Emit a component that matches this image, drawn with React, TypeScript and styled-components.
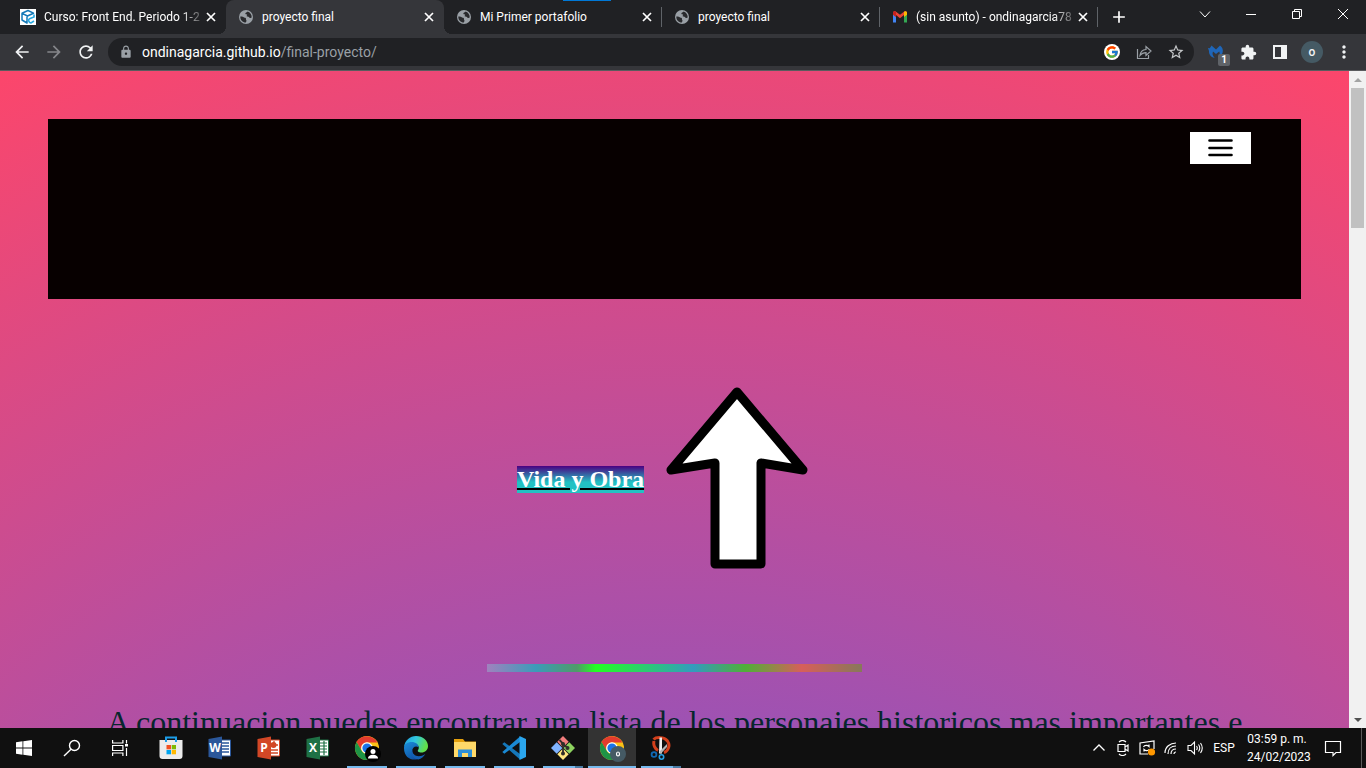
import React from "react";
import styled, { createGlobalStyle, css } from "styled-components";
import {
  MdArrowBack,
  MdArrowForward,
  MdRefresh,
  MdLock,
  MdStarBorder,
  MdExtension,
  MdMoreVert,
  MdClose,
  MdAdd,
} from "react-icons/md";
import { FcGoogle } from "react-icons/fc";

const ui = `Roboto, "Open Sans", sans-serif`;
const serif = `"Liberation Serif", "Times New Roman", serif`;

const GlobalStyle = createGlobalStyle`
  *, *::before, *::after { box-sizing: border-box; }
  body { margin: 0; background: #111; font-family: ${ui}; }
  button { font: inherit; color: inherit; background: none; border: 0; padding: 0; }
  svg { display: block; flex: none; }
`;

const Desktop = styled.div`
  display: flex;
  flex-direction: column;
  height: 100vh;
  overflow: hidden;
`;

/* ---------- tab strip ---------- */

const TabStrip = styled.header`
  position: relative;
  display: flex;
  flex: none;
  height: 34px;
  padding-left: 8px;
  background: #202124;
  color: #fff;
`;

const DragHandle = styled.span`
  position: absolute;
  top: 0;
  left: 563px;
  width: 48px;
  height: 1px;
  background: #0078d7;
`;

const Tab = styled.div<{ $active?: boolean; $divider?: boolean }>`
  position: relative;
  display: flex;
  align-items: center;
  flex: 0 1 218px;
  min-width: 0;
  padding: 0 7px 0 12px;
  background: ${(p) => (p.$active ? "#35363a" : "transparent")};
  border-radius: 8px 8px 0 0;

  ${(p) =>
    p.$active &&
    css`
      &::before,
      &::after {
        content: "";
        position: absolute;
        bottom: 0;
        width: 8px;
        height: 8px;
      }
      &::before {
        left: -8px;
        background: radial-gradient(circle at 0 0, #202124 8px, #35363a 8px);
      }
      &::after {
        right: -8px;
        background: radial-gradient(circle at 100% 0, #202124 8px, #35363a 8px);
      }
    `}

  ${(p) =>
    p.$divider &&
    css`
      &::after {
        content: "";
        position: absolute;
        right: 0;
        top: 7px;
        width: 1px;
        height: 20px;
        background: #5f6368;
      }
    `}
`;

const TabTitle = styled.span<{ $fade?: boolean }>`
  flex: 1;
  min-width: 0;
  margin: 0 -4px 0 8px;
  overflow: hidden;
  white-space: nowrap;
  font-size: 12px;
  line-height: 16px;
  ${(p) =>
    p.$fade &&
    css`
      mask-image: linear-gradient(to right, #000 84%, transparent);
    `}
`;

const TabClose = styled.button`
  display: grid;
  place-items: center;
  width: 16px;
  height: 16px;
`;

const NewTab = styled.button`
  display: grid;
  place-items: center;
  width: 28px;
  margin-left: 7px;
`;

const WindowControls = styled.div`
  display: flex;
  height: 28px;
  margin-left: auto;
`;

const WindowButton = styled.button`
  display: grid;
  place-items: center;
  width: 46px;
`;

/* ---------- toolbar ---------- */

const Toolbar = styled.nav`
  display: flex;
  align-items: center;
  flex: none;
  height: 37px;
  gap: 4px;
  padding: 0 8px;
  background: #35363a;
  border-bottom: 1px solid #5a5b5e;
`;

const IconButton = styled.button<{ $dim?: boolean }>`
  position: relative;
  display: grid;
  place-items: center;
  flex: none;
  width: 28px;
  height: 28px;
  color: ${(p) => (p.$dim ? "#85868a" : "#f1f3f4")};
`;

const Omnibox = styled.div`
  position: relative;
  display: flex;
  align-items: center;
  flex: 1;
  min-width: 0;
  height: 28px;
  gap: 4px;
  margin: 0 4px;
  padding: 0 4px 0 11px;
  border-radius: 14px;
  background: #202124;
  color: #9aa0a6;
`;

const Address = styled.div`
  flex: 1;
  min-width: 0;
  margin-left: 5px;
  overflow: hidden;
  white-space: nowrap;
  font-size: 14px;
  line-height: 20px;
  strong {
    font-weight: 400;
    color: #fff;
  }
`;

const ExtensionBadge = styled.span`
  position: absolute;
  right: 0;
  bottom: 0;
  width: 12px;
  height: 12px;
  border-radius: 2px;
  background: #5f6368;
  color: #fff;
  font-size: 10px;
  font-weight: 700;
  line-height: 12px;
  text-align: center;
`;

const Avatar = styled.span`
  display: grid;
  place-items: center;
  width: 22px;
  height: 22px;
  border-radius: 50%;
  background: #455a64;
  font-size: 12px;
  font-weight: 500;
  line-height: 16px;
`;

/* ---------- page ---------- */

const Viewport = styled.div`
  display: flex;
  flex: 1;
  min-height: 0;
`;

const Page = styled.main`
  flex: 1;
  min-width: 0;
  overflow: hidden;
  padding: 48px;
  background: radial-gradient(circle, #3f5efb 0%, #fc466b 100%) top / 100% 2924px no-repeat;
  font-family: ${serif};
`;

const Banner = styled.section`
  display: flex;
  align-items: flex-start;
  justify-content: flex-end;
  height: 180px;
  padding: 13px 50px;
  background: #070000;
`;

const MenuButton = styled.button`
  display: grid;
  place-items: center;
  width: 61px;
  height: 32px;
  background: #fff;
`;

const Hero = styled.section`
  display: flex;
  align-items: center;
  justify-content: center;
  height: 361px;
`;

const HeroLink = styled.a`
  background: linear-gradient(#4b0082 0%, #22c1c3 60%);
  color: #fff;
  font-size: 24px;
  font-weight: 700;
  line-height: 27px;
  text-decoration: underline 2px #000;
`;

const Rule = styled.hr`
  width: 30%;
  height: 8px;
  margin: 4px auto 0;
  border: 0;
  background: linear-gradient(
    to right,
    #a082be 0%,
    #3c9bb9 13%,
    #509b69 24%,
    #22ff22 29%,
    #349bbe 55%,
    #50af37 69%,
    #d75f5a 84%,
    #87785a 100%
  );
`;

const Intro = styled.p`
  margin: 32px 0 0;
  padding: 0 48px;
  color: #07262d;
  font-size: 32px;
  line-height: 37px;
  text-align: center;
  white-space: nowrap;
`;

const Scrollbar = styled.div`
  display: flex;
  flex-direction: column;
  align-items: center;
  flex: none;
  width: 17px;
  background: #f1f1f1;
`;

const ScrollTrack = styled.div`
  flex: 1;
  width: 13px;
`;

const ScrollThumb = styled.div`
  height: 140px;
  background: #c1c1c1;
`;

const ScrollArrow = styled.button`
  display: grid;
  place-items: center;
  width: 17px;
  height: 17px;
`;

/* ---------- taskbar ---------- */

const Taskbar = styled.footer`
  display: flex;
  flex: none;
  height: 40px;
  background: #101010;
  color: #fff;
`;

const Apps = styled.div`
  display: flex;
  gap: 1px;
  margin-left: 3px;
`;

const TaskButton = styled.button<{ $state?: "open" | "stacked" | "active" }>`
  position: relative;
  display: grid;
  place-items: center;
  width: 48px;
  height: 40px;
  background: ${(p) => (p.$state === "active" ? "#333" : "transparent")};

  ${(p) =>
    p.$state &&
    css`
      &::after {
        content: "";
        position: absolute;
        bottom: 0;
        left: ${p.$state === "active" ? "0" : "4px"};
        right: ${p.$state === "active" ? "0" : "4px"};
        height: 2px;
        background: ${p.$state === "stacked"
          ? "linear-gradient(to right, #76b9ed 32px, #4a7ba3 32px)"
          : "#76b9ed"};
      }
    `}
`;

const Tray = styled.div`
  display: flex;
  align-items: center;
  margin-left: auto;
`;

const TrayButton = styled.button<{ $wide?: boolean }>`
  display: grid;
  place-items: center;
  width: ${(p) => (p.$wide ? "56px" : "24px")};
  height: 40px;
`;

const Language = styled.span`
  width: 34px;
  margin-right: 6px;
  font-size: 12px;
  line-height: 16px;
  text-align: center;
`;

const Clock = styled.time`
  width: 60px;
  margin-right: -2px;
  font-size: 12px;
  line-height: 18px;
  text-align: center;
  white-space: nowrap;
`;

const ShowDesktop = styled.button`
  width: 5px;
  height: 40px;
  border-left: 1px solid #5a5a5a;
`;

/* ---------- drawings ---------- */

const Globe = () => (
  <svg width="16" height="16" viewBox="0 0 16 16" aria-hidden>
    <circle cx="8" cy="8" r="7" fill="#9aa0a6" />
    <path
      d="M2.300 7.500C4 7.200 5 7.500 5.700 8.300c.5.6 1.400.3 2 .8.600.6 0 1.500.5 1.900.6.4.2 1.600-.4 2.500C4.500 13.500 2.200 11 2.300 7.500zM9.500 2.600c-.2.9-1.200.9-1.900 1.400-.6.5-.2 1.300.6 1.300 1.200 0 1.200.8.6 1.300-.5.4 0 1 .8 1 1.200 0 1.500.9 2.200 1.300.6.300 1.400.1 1.900-.3.200-3-1.600-5.200-4.200-6z"
      fill="#292a2d"
    />
  </svg>
);

const CourseIcon = () => (
  <svg width="16" height="16" viewBox="0 0 16 16" aria-hidden>
    <rect width="16" height="16" fill="#fff" />
    <path d="M8 1.500L13.500 4.200L7.500 7L2 4.300ZM2 4.300V11L7 14V7" fill="none" stroke="#1479b8" strokeWidth="1.500" strokeLinejoin="round" />
    <path d="M14 5.500V8L9.500 9.700C8 10.500 8.500 13.500 11 14L14 12" fill="none" stroke="#27a9e1" strokeWidth="1.600" />
  </svg>
);

const GmailIcon = () => (
  <svg width="16" height="16" viewBox="0 0 16 16" aria-hidden>
    <path d="M1 4v9.500h3V7z" fill="#4285f4" />
    <path d="M15 4v9.500h-3V7z" fill="#34a853" />
    <path d="M1 5V3.800c0-1.500 1.600-2 2.700-1.200L8 5.800l4.300-3.200c1.100-.8 2.700-.3 2.700 1.200L12 8V6L8 9.200 4 6v2z" fill="#ea4335" />
    <path d="M1 3.800C1 2.500 2.500 2 3.500 2.500L4 3v5L1 5.700z" fill="#c5221f" />
    <path d="M12 3l.5-.5C13.500 2 15 2.500 15 3.800v1.900L12 8z" fill="#fbbc04" />
  </svg>
);

const ShareIcon = () => (
  <svg width="16" height="16" viewBox="0 0 16 16" fill="none" stroke="#9aa0a6" strokeWidth="1.200" aria-hidden>
    <path d="M1.500 5v9.500h11V11" />
    <path d="M4 11.500C4.500 7.500 7 5.700 10 5.500V2.500L15 7l-5 4.500V8.700C7.500 8.700 5.600 9.500 4 11.500z" />
  </svg>
);

const MalwareIcon = () => (
  <svg width="16" height="16" viewBox="0 0 16 16" aria-hidden>
    <path
      d="M3.500 1.500L8 5.500l4-4c2.500 1.500 3.500 4.500 2.500 7.500-.5 1.500-1.700 2.700-3.200 3.500.6-2 .6-3.700-.1-5L8 10 5 7.500c-1 2.500-.3 4 1.700 6.500C2.500 13 .8 10 1 7L0 4l1.800.2z"
      fill="#1f66b8"
    />
  </svg>
);

const SidePanelIcon = () => (
  <svg width="16" height="16" viewBox="0 0 16 16" aria-hidden>
    <path d="M1 1h14v14H1z M3 3v10h6V3z" fill="#f1f3f4" fillRule="evenodd" />
  </svg>
);

const UpArrow = () => (
  <svg width="188" height="188" viewBox="0 0 188 188" role="img" aria-label="Flecha hacia arriba">
    <path
      d="M93 6L159 84L117 77V178H71V77L27 84Z"
      fill="#fff"
      stroke="#000"
      strokeWidth="9"
      strokeLinejoin="round"
    />
  </svg>
);

const WindowsIcon = () => (
  <svg width="16" height="16" viewBox="0 0 16 16" fill="#fff" aria-hidden>
    <path d="M0 2.300L6.500 1.300v6.200H0zM7.300 1.200L16 0v7.500H7.300zM0 8.500h6.500v6.200L0 13.700zM7.300 8.500H16V16l-8.700-1.200z" />
  </svg>
);

const SearchIcon = () => (
  <svg width="18" height="18" viewBox="0 0 18 18" fill="none" stroke="#fff" strokeWidth="1.400" aria-hidden>
    <circle cx="11.500" cy="6.500" r="5" />
    <path d="M8 10.200L1 17" />
  </svg>
);

const TaskViewIcon = () => (
  <svg width="16" height="16" viewBox="0 0 16 16" fill="none" stroke="#fff" strokeWidth="1.200" aria-hidden>
    <path d="M.6 0v3h10.300V0M.6 16v-3h10.300v3M.6 5.500h10.300v5H.6zM14.500 0v3.500M14.500 8v8" />
    <path d="M13 4h3v2.500h-3z" fill="#fff" stroke="none" />
  </svg>
);

const StoreIcon = () => (
  <svg width="24" height="24" viewBox="0 0 24 24" aria-hidden>
    <path d="M7 6V1.500h10V6" fill="none" stroke="#1c9de8" strokeWidth="2" />
    <path d="M.5 4h23v16a3 3 0 0 1-3 3h-17a3 3 0 0 1-3-3z" fill="#ececec" />
    <path d="M7 6V3M17 6V3" stroke="#1c9de8" strokeWidth="2" />
    <path d="M7.500 9H12v4.300H7.500z" fill="#f25022" />
    <path d="M12.700 9H17v4.300h-4.300z" fill="#7fba00" />
    <path d="M7.500 14H12v4.300H7.500z" fill="#00a4ef" />
    <path d="M12.700 14H17v4.300h-4.300z" fill="#ffb900" />
  </svg>
);

const OfficeGlyph = styled.text`
  font: 700 12px "Open Sans", sans-serif;
  fill: #fff;
  text-anchor: middle;
`;

const OfficeIcon = ({ letter, color, children }: { letter: string; color: string; children: React.ReactNode }) => (
  <svg width="24" height="24" viewBox="0 0 24 24" aria-hidden>
    <path d="M12 4h10.500v16H12z" fill="#fff" stroke={color} />
    {children}
    <path d="M.5 3L14 .5v23L.5 21z" fill={color} />
    <OfficeGlyph x="7" y="16">{letter}</OfficeGlyph>
  </svg>
);

const ChromeSvg = styled.svg`
  overflow: visible;
`;

const ChromeLogo = ({ children }: { children: React.ReactNode }) => (
  <ChromeSvg width="24" height="24" viewBox="0 0 24 24" aria-hidden>
    <circle cx="12" cy="12" r="12" fill="#fbc116" />
    <path d="M1.600 6A12 12 0 0 1 22.400 6.500H12a6 6 0 0 0-5.200 9z" fill="#e33b2e" />
    <path d="M1.600 6A12 12 0 0 0 12 24l5.200-9a6 6 0 0 1-10.400 0z" fill="#1e9446" />
    <circle cx="12" cy="12" r="5.800" fill="#fff" />
    <circle cx="12" cy="12" r="4.600" fill="#1a73e8" />
    {children}
  </ChromeSvg>
);

const EdgeIcon = () => (
  <svg width="24" height="24" viewBox="0 0 24 24" aria-hidden>
    <defs>
      <linearGradient id="edgeTop" x1="0" y1="0" x2="1" y2="0.300">
        <stop offset="0" stopColor="#1f9be0" />
        <stop offset="0.500" stopColor="#31c7e0" />
        <stop offset="1" stopColor="#62e04a" />
      </linearGradient>
      <linearGradient id="edgeLow" x1="0" y1="0" x2="0.600" y2="1">
        <stop offset="0" stopColor="#1b8fdc" />
        <stop offset="1" stopColor="#0f52a3" />
      </linearGradient>
    </defs>
    <path d="M0 11C1 4 6 0 12 0c7 0 12 4.600 12 10 0 4-3 6.500-6.500 6.500-3 0-4.500-1.200-3.300-2.700 1.300-1.700.8-5.300-3.200-6.300C6 6.300 1.500 8 0 11z" fill="url(#edgeTop)" />
    <path d="M0 12c0-4 4-6 7.500-6 4.500 0 7 2.600 7 5.200-3-2-6.500.3-6.300 4 .2 4 4 7 8.300 6.600C11 25.500 0 24 0 12z" fill="url(#edgeLow)" />
    <path d="M8.300 14c-.4 5 6 8.800 13 4-1.300 2.500-4 4.700-7 5.500C9 22.500 5.500 18 8.300 14z" fill="#1560b3" />
  </svg>
);

const FolderIcon = () => (
  <svg width="24" height="24" viewBox="0 0 24 24" aria-hidden>
    <path d="M1 3h9l2 2.500h11V20H1z" fill="#e5a00d" />
    <path d="M1 6h22v15H1z" fill="#ffd969" />
    <path d="M5 21v-7.500h14V21h-4v-4H9v4z" fill="#2d8fd8" />
  </svg>
);

const VsCodeIcon = () => (
  <svg width="24" height="24" viewBox="0 0 24 24" aria-hidden>
    <path d="M.3 8L2.300 6.200 18 18v5.500z" fill="#1577b9" />
    <path d="M.3 16L2.300 17.800 18 6V.5z" fill="#1a8ad4" />
    <path d="M17.500 0L24 3v18l-6.500 3z" fill="#2ba6ee" />
  </svg>
);

const GitIcon = () => (
  <svg width="24" height="24" viewBox="0 0 24 24" aria-hidden>
    <path d="M12 0l5.700 5.700-5.700 5.700-5.700-5.700z" fill="#f27d7d" />
    <path d="M5.700 6.300l5.700 5.700-5.700 5.700L0 12z" fill="#80b3ff" />
    <path d="M18.300 6.300L24 12l-5.700 5.700-5.700-5.700z" fill="#8dd35f" />
    <path d="M12 12.600l5.700 5.700L12 24l-5.700-5.700z" fill="#ffe680" />
    <path d="M8.500 4l3.500 3.500v10M12 8l5 4" fill="none" stroke="#302d2a" strokeWidth="1.800" />
    <g fill="#302d2a">
      <circle cx="12" cy="8" r="2" />
      <circle cx="12" cy="17.500" r="2" />
      <circle cx="16.500" cy="12" r="2" />
    </g>
  </svg>
);

const SnipIcon = () => (
  <svg width="24" height="24" viewBox="0 0 24 24" fill="none" aria-hidden>
    <path d="M4.500 3.500C7 1 15 .5 18.500 5c3.500 5 0 10.500-3.500 11.500M5 5c-1 4 1 8 4 9.500" stroke="#d3401c" strokeWidth="3" />
    <path d="M10.500 1.500h2.500v16h-3z" fill="#f0f0f0" />
    <path d="M18 8v3l-6.500 7-1-2.500z" fill="#b5b5b5" />
    <circle cx="5" cy="18.500" r="2.400" stroke="#1169b5" strokeWidth="1.800" />
    <circle cx="12.500" cy="21" r="2.200" stroke="#27a0e6" strokeWidth="1.600" />
  </svg>
);

const Line = ({ d, size = 16, width = 1 }: { d: string; size?: number; width?: number }) => (
  <svg width={size} height={size} viewBox={`0 0 ${size} ${size}`} fill="none" stroke="currentColor" strokeWidth={width} aria-hidden>
    <path d={d} />
  </svg>
);

const Triangle = ({ d, fill }: { d: string; fill: string }) => (
  <svg width="8" height="4" viewBox="0 0 8 4" aria-hidden>
    <path d={d} fill={fill} />
  </svg>
);

const UpdateIcon = () => (
  <svg width="18" height="16" viewBox="0 0 18 16" fill="none" stroke="#fff" strokeWidth="1.200" aria-hidden>
    <path d="M10 14H2V3l14-2v8" />
    <path d="M5.500 7c1-2 4-2 5.500-.5V4.500M11.500 9c-1 2-4 2-5.500.5v2" />
    <circle cx="13.500" cy="12" r="3.600" fill="#ff9800" stroke="none" />
  </svg>
);

/* ---------- composition ---------- */

const tabs = [
  { title: "Curso: Front End. Periodo 1-2", icon: <CourseIcon />, fade: true },
  { title: "proyecto final", icon: <Globe />, active: true },
  { title: "Mi Primer portafolio", icon: <Globe />, divider: true },
  { title: "proyecto final", icon: <Globe />, divider: true },
  { title: "(sin asunto) - ondinagarcia78", icon: <GmailIcon />, fade: true, divider: true },
];

export default function App() {
  return (
    <Desktop>
      <GlobalStyle />
      <TabStrip>
        {tabs.map((tab, i) => (
          <Tab key={i} $active={tab.active} $divider={tab.divider}>
            {tab.icon}
            <TabTitle $fade={tab.fade}>{tab.title}</TabTitle>
            <TabClose aria-label="Cerrar pestaña">
              <Line d="M4 4L12 12M12 4L4 12" width={1.7} />
            </TabClose>
          </Tab>
        ))}
        <NewTab aria-label="Nueva pestaña">
          <MdAdd size={20} />
        </NewTab>
        <WindowControls>
          <WindowButton aria-label="Buscar pestañas"><Line d="M3 5.500L8 11L13 5.500" /></WindowButton>
          <WindowButton aria-label="Minimizar"><Line d="M3 8.500H13" /></WindowButton>
          <WindowButton aria-label="Restaurar"><Line d="M3.500 5.500H10.500V12.500H3.500ZM5.500 5V3.500H12.500V10.500H11" /></WindowButton>
          <WindowButton aria-label="Cerrar"><Line d="M3 3L13 13M13 3L3 13" /></WindowButton>
        </WindowControls>
        <DragHandle />
      </TabStrip>

      <Toolbar>
        <IconButton aria-label="Atrás"><MdArrowBack size={20} /></IconButton>
        <IconButton aria-label="Adelante" $dim><MdArrowForward size={20} /></IconButton>
        <IconButton aria-label="Recargar"><MdRefresh size={20} /></IconButton>
        <Omnibox>
          <MdLock size={14} />
          <Address>
            <strong>ondinagarcia.github.io</strong>/final-proyecto/
          </Address>
          <IconButton aria-label="Google">
            <svg width="16" height="16" viewBox="0 0 16 16" aria-hidden>
              <circle cx="8" cy="8" r="8" fill="#fff" />
              <FcGoogle x="1" y="1" size={14} />
            </svg>
          </IconButton>
          <IconButton aria-label="Compartir"><ShareIcon /></IconButton>
          <IconButton aria-label="Favorito"><MdStarBorder size={18} color="#c4c7c9" /></IconButton>
        </Omnibox>
        <IconButton aria-label="Malwarebytes">
          <MalwareIcon />
          <ExtensionBadge>1</ExtensionBadge>
        </IconButton>
        <IconButton aria-label="Extensiones"><MdExtension size={17} /></IconButton>
        <IconButton aria-label="Panel lateral"><SidePanelIcon /></IconButton>
        <IconButton aria-label="Perfil"><Avatar>o</Avatar></IconButton>
        <IconButton aria-label="Más"><MdMoreVert size={20} /></IconButton>
      </Toolbar>

      <Viewport>
        <Page>
          <Banner>
            <MenuButton aria-label="Menú">
              <svg width="25" height="18" viewBox="0 0 25 18" aria-hidden>
                <path d="M1.500 1.500H23.500M1.500 9H23.500M1.500 16H23.500" stroke="#000" strokeWidth="2.600" strokeLinecap="round" />
              </svg>
            </MenuButton>
          </Banner>
          <Hero>
            <HeroLink href="#vida">Vida y Obra</HeroLink>
            <UpArrow />
          </Hero>
          <Rule />
          <Intro>
            A continuacion puedes encontrar una lista de los personajes historicos mas importantes e
          </Intro>
        </Page>
        <Scrollbar>
          <ScrollArrow aria-label="Subir"><Triangle d="M0 4L4 0L8 4Z" fill="#a3a3a3" /></ScrollArrow>
          <ScrollTrack><ScrollThumb /></ScrollTrack>
          <ScrollArrow aria-label="Bajar"><Triangle d="M0 0L4 4L8 0Z" fill="#505050" /></ScrollArrow>
        </Scrollbar>
      </Viewport>

      <Taskbar>
        <TaskButton aria-label="Inicio"><WindowsIcon /></TaskButton>
        <TaskButton aria-label="Buscar"><SearchIcon /></TaskButton>
        <TaskButton aria-label="Vista de tareas"><TaskViewIcon /></TaskButton>
        <Apps>
          <TaskButton aria-label="Store"><StoreIcon /></TaskButton>
          <TaskButton aria-label="Word">
            <OfficeIcon letter="W" color="#2b579a">
              <path d="M13 7h8M13 10h8M13 13h8M13 16h8" stroke="#2b579a" strokeWidth="1.300" />
            </OfficeIcon>
          </TaskButton>
          <TaskButton aria-label="PowerPoint">
            <OfficeIcon letter="P" color="#d24726">
              <circle cx="16.500" cy="9" r="3" fill="#d24726" />
              <path d="M17 5v4h4M14 14h7M14 17h7" fill="none" stroke="#d24726" strokeWidth="1.300" />
            </OfficeIcon>
          </TaskButton>
          <TaskButton aria-label="Excel">
            <OfficeIcon letter="X" color="#1e7145">
              <path d="M14 7h7M14 10h7M14 13h7M14 16h7M18 5v14" stroke="#1e7145" strokeWidth="1.200" />
            </OfficeIcon>
          </TaskButton>
          <TaskButton aria-label="Chrome" $state="open">
            <ChromeLogo>
              <circle cx="18" cy="18" r="8" fill="#000" />
              <circle cx="18" cy="15.500" r="2.500" fill="#fff" />
              <path d="M13 22.500c0-5 10-5 10 0z" fill="#fff" />
            </ChromeLogo>
          </TaskButton>
          <TaskButton aria-label="Edge" $state="open"><EdgeIcon /></TaskButton>
          <TaskButton aria-label="Explorador" $state="open"><FolderIcon /></TaskButton>
          <TaskButton aria-label="Visual Studio Code" $state="open"><VsCodeIcon /></TaskButton>
          <TaskButton aria-label="Git" $state="stacked"><GitIcon /></TaskButton>
          <TaskButton aria-label="Chrome, perfil o" $state="active">
            <ChromeLogo>
              <circle cx="18" cy="18" r="8" fill="#455a64" />
              <ellipse cx="18" cy="18" rx="1.500" ry="2" fill="none" stroke="#fff" strokeWidth="1.200" />
            </ChromeLogo>
          </TaskButton>
          <TaskButton aria-label="Recortes" $state="stacked"><SnipIcon /></TaskButton>
        </Apps>
        <Tray>
          <TrayButton aria-label="Mostrar iconos ocultos"><Line d="M2.500 10.500L8 5L13.500 10.500" width={1.3} /></TrayButton>
          <TrayButton aria-label="Reunirse ahora"><Line d="M3 4.500H10V11.500H3ZM10 7L13 5V11L10 9M4 2C6 0 9 0 11 2M4 14C6 16 9 16 11 14" width={1.2} /></TrayButton>
          <TrayButton aria-label="Actualización"><UpdateIcon /></TrayButton>
          <TrayButton aria-label="Red"><Line d="M2 13C2 7 7 3 13 3M5 14C5 9 8 6 13 6M8 14C8 11 10 9 13 9M11 14C11 13 12 12 13 12" width={1.2} /></TrayButton>
          <TrayButton aria-label="Volumen"><Line size={18} d="M2 6.500H5L8.500 3V15L5 11.500H2ZM10.500 7Q12 9 10.500 11M12.500 5.500Q15 9 12.500 12.500M14.500 4Q18 9 14.500 14" width={1.1} /></TrayButton>
          <Language>ESP</Language>
          <Clock>
            03:59 p. m.
            <br />
            24/02/2023
          </Clock>
          <TrayButton aria-label="Notificaciones" $wide><Line size={18} d="M1.500 2.500H16.500V13.500H12L9 16.500V13.500H1.500Z" width={1.2} /></TrayButton>
          <ShowDesktop aria-label="Mostrar escritorio" />
        </Tray>
      </Taskbar>
    </Desktop>
  );
}
